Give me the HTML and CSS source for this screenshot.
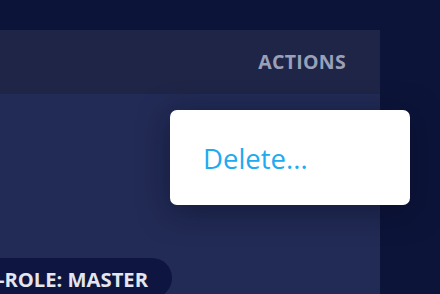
FILE: index.html
```html
<!DOCTYPE html>
<html>
<head>
<meta charset="utf-8">
<link rel="stylesheet" href="styles.css">
</head>
<body>
<div class="stage">
  <div class="panel">
    <div class="panel-head">
      <span class="col-title">ACTIONS</span>
    </div>
    <div class="panel-body">
      <div class="pill"><span class="pill-text">ACCESS-ROLE: MASTER</span></div>
    </div>
  </div>
  <div class="menu">
    <span class="menu-item">Delete...</span>
  </div>
</div>
</body>
</html>
```
FILE: styles.css
```css
html, body {
  margin: 0;
  padding: 0;
  width: 440px;
  height: 294px;
  overflow: hidden;
  background: #0c1439;
  font-family: "Open Sans", "DejaVu Sans", sans-serif;
}
.stage {
  position: relative;
  width: 440px;
  height: 294px;
  padding-top: 30px;
  box-sizing: border-box;
}
.panel {
  width: 380px;
  height: 264px;
  display: flex;
  flex-direction: column;
  background: #222b55;
}
.panel-head {
  height: 64px;
  background: #1e2547;
  display: flex;
  align-items: center;
  justify-content: flex-end;
  padding-right: 34px;
}
.col-title {
  color: #9ba0b9;
  font-weight: 700;
  font-size: 19.5px;
  letter-spacing: 0.3px;
  margin-top: -1px;
}
.panel-body {
  flex: 1;
  display: flex;
  align-items: flex-end;
  overflow: hidden;
}
.pill {
  height: 40px;
  margin-bottom: -4px;
  background: #0d1540;
  border-radius: 0 24px 24px 0;
  display: flex;
  align-items: center;
  justify-content: flex-end;
  width: 172px;
  padding-right: 24px;
  box-sizing: border-box;
  overflow: hidden;
  white-space: nowrap;
}
.pill-text {
  color: #e3e6ef;
  font-weight: 700;
  font-size: 20.2px;
  margin-top: 2px;
}
.menu {
  position: absolute;
  left: 170px;
  top: 110px;
  width: 240px;
  height: 95px;
  background: #ffffff;
  border-radius: 7px;
  box-shadow: 0 6px 30px rgba(5, 10, 35, 0.5);
  display: flex;
  align-items: center;
  padding-left: 33px;
  box-sizing: border-box;
}
.menu-item {
  color: #20aaf0;
  font-size: 27.5px;
  margin-top: 1px;
}
```
